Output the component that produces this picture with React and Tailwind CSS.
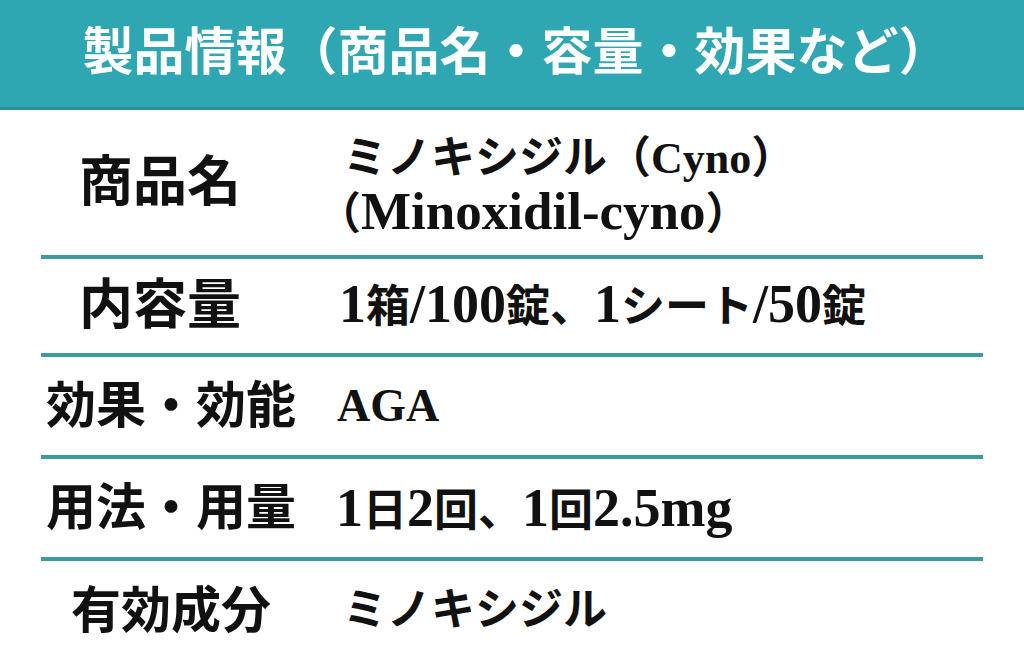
// 英数字は和文より大きめに見えるので別サイズにする
const L = ({ children, size = "text-[54px]" }) => <span className={size}>{children}</span>;

export default function App() {
  return (
    <div
      className="w-[1024px] h-[666px] overflow-hidden bg-white text-[#111]"
      style={{ fontFamily: '"Liberation Serif", "Noto Sans CJK JP", serif' }}
    >
      {/* ヘッダー */}
      <div className="h-[110px] bg-[#2ea7b3] border-b-[3px] border-[#2b8e95] flex items-center justify-center">
        <h1 className="text-[51px] font-bold text-white leading-none pl-[8px]">
          製品情報（商品名・容量・効果など）
        </h1>
      </div>

      <div className="px-[41px]">
        {/* 商品名 */}
        <div className="h-[149px] flex items-center border-b-4 border-[#3a9aa2]">
          <div className="w-[260px] pr-[22px] text-center text-[54px] font-bold leading-none">商品名</div>
          <div className="ml-[42px] text-[44px] font-bold leading-[53px] pt-[8px]">
            <div>ミノキシジル（Cyno）</div>
            <div className="-ml-[26px]">
              （<L size="text-[53px]">Minoxidil-cyno</L>）
            </div>
          </div>
        </div>

        {/* 内容量 */}
        <div className="h-[98px] flex items-center border-b-4 border-[#3a9aa2]">
          <div className="w-[260px] pr-[22px] text-center text-[54px] font-bold leading-none">内容量</div>
          <div className="ml-[38px] text-[44px] font-bold leading-none pb-[4px]">
            <L>1</L>箱<L>/100</L>錠、<L>1</L>シート<L>/50</L>錠
          </div>
        </div>

        {/* 効果・効能 */}
        <div className="h-[102px] flex items-center border-b-4 border-[#3a9aa2]">
          <div className="w-[260px] text-center text-[50px] font-bold leading-none">効果・効能</div>
          <div className="ml-[36px] text-[46px] font-bold leading-none">AGA</div>
        </div>

        {/* 用法・用量 */}
        <div className="h-[102px] flex items-center border-b-4 border-[#3a9aa2]">
          <div className="w-[260px] text-center text-[50px] font-bold leading-none">用法・用量</div>
          <div className="ml-[35px] text-[44px] font-bold leading-none">
            <L>1</L>日<L>2</L>回、<L>1</L>回<L>2.5mg</L>
          </div>
        </div>

        {/* 有効成分 */}
        <div className="h-[100px] flex items-center">
          <div className="w-[260px] text-center text-[50px] font-bold leading-none">有効成分</div>
          <div className="ml-[42px] text-[44px] font-bold leading-none">ミノキシジル</div>
        </div>
      </div>
    </div>
  );
}
